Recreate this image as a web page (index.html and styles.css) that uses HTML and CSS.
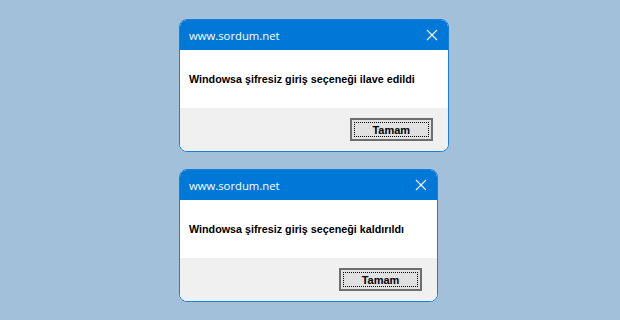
FILE: index.html
```html
<!DOCTYPE html>
<html lang="tr">
<head>
  <meta charset="UTF-8">
  <title>sordum.net mesaj kutuları</title>
  <link rel="stylesheet" href="styles.css">
</head>
<body>

<div class="stack">

  <!-- First message box -->
  <div class="dialog">
    <div class="titlebar">
      <span class="title">www.sordum.net</span>
      <svg class="close" width="12" height="12" viewBox="0 0 12 12">
        <path d="M1 1 L11 11 M11 1 L1 11" stroke="#fff" stroke-width="1.1" fill="none"/>
      </svg>
    </div>
    <div class="message">Windowsa şifresiz giriş seçeneği ilave edildi</div>
    <div class="footer">
      <button class="button">Tamam</button>
    </div>
  </div>

  <!-- Second message box -->
  <div class="dialog">
    <div class="titlebar">
      <span class="title">www.sordum.net</span>
      <svg class="close" width="12" height="12" viewBox="0 0 12 12">
        <path d="M1 1 L11 11 M11 1 L1 11" stroke="#fff" stroke-width="1.1" fill="none"/>
      </svg>
    </div>
    <div class="message">Windowsa şifresiz giriş seçeneği kaldırıldı</div>
    <div class="footer">
      <button class="button">Tamam</button>
    </div>
  </div>

</div>

</body>
</html>
```

FILE: styles.css
```css
body {
  margin: 0;
  background-color: #a2c0d9;
  font-family: "Liberation Sans", Arial, sans-serif;
}

.stack {
  display: flex;
  flex-direction: column;
  align-items: flex-start;
  gap: 17px;
  padding: 19px 0 0 179px;
}

.dialog {
  width: fit-content;
  border: 1px solid #1a7fd6;
  border-radius: 8px;
  overflow: hidden;
  background: #ffffff;
}

.titlebar {
  height: 30px;
  background-color: #0078d7;
  display: flex;
  align-items: center;
  justify-content: space-between;
  padding: 0 10px 0 9px;
}

.title {
  color: #ffffff;
  font-family: "Open Sans", "Noto Sans", sans-serif;
  font-size: 11.3px;
}

.close {
  display: block;
}

.message {
  height: 58px;
  display: flex;
  align-items: center;
  padding: 0 33px 0 9px;
  font-size: 10.75px;
  font-weight: bold;
  color: #000;
  white-space: nowrap;
}

.footer {
  height: 43px;
  background-color: #f0f0f0;
  display: flex;
  justify-content: flex-end;
  align-items: flex-start;
  padding: 10px 15px 0 0;
  box-sizing: border-box;
}

.button {
  width: 83px;
  height: 23px;
  background-color: #e1e1e1;
  border: 2px solid #6e6e6e;
  outline: 1px dotted #000;
  outline-offset: -5px;
  font-family: "Liberation Sans", Arial, sans-serif;
  font-size: 11px;
  font-weight: bold;
  color: #000;
  padding: 0;
}
```
